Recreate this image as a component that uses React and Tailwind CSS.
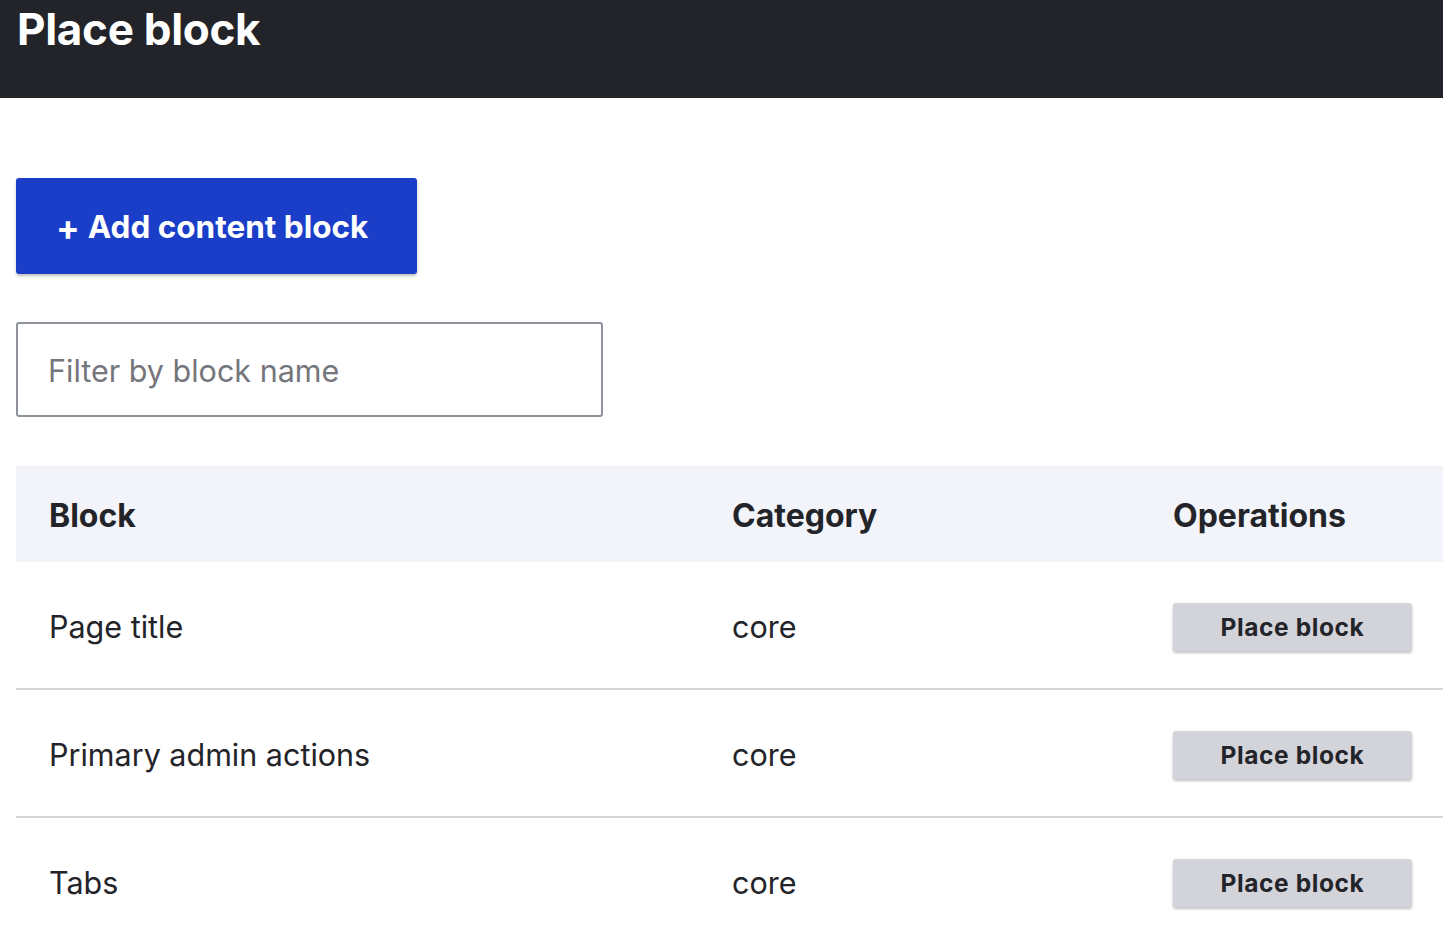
import React from "react";

const rows = [
  { name: "Page title", category: "core" },
  { name: "Primary admin actions", category: "core" },
  { name: "Tabs", category: "core" },
];

const App = () => {
  return (
    <div className="min-h-screen bg-white font-['Inter',sans-serif] text-[#232429] overflow-hidden">
      <div className="h-[98px] bg-[#232429] pl-[17px]">
        <h1 className="text-[44px] font-bold leading-[58px] text-white tracking-[-0.3px]">
          Place block
        </h1>
      </div>

      <div className="pl-4 pt-[80px]">
        <button className="flex h-[96px] w-[401px] items-center rounded-[3px] bg-[#1a3ec8] pl-[40px] pt-[2px] text-[31.5px] font-bold text-white shadow-[0_2px_3px_rgba(0,0,0,0.25)]">
          <span className="mr-[8px] text-[35px] leading-none">+</span>
          Add content block
        </button>

        <input
          className="mt-[48px] block h-[95px] w-[587px] rounded-[3px] border-2 border-[#8e929c] px-[30px] pt-[2px] text-[30.5px] placeholder:text-[#75767b] outline-none"
          placeholder="Filter by block name"
        />

        <div className="mt-[49px] w-[1427px]">
          <div className="grid h-[96px] grid-cols-[683px_441px_1fr] items-center bg-[#f3f4f9] pt-[3px] text-[32px] font-bold">
            <div className="pl-[33px]">Block</div>
            <div className="pl-[33px]">Category</div>
            <div className="pl-[33px]">Operations</div>
          </div>
          {rows.map((row) => (
            <div
              key={row.name}
              className="grid h-[128px] grid-cols-[683px_441px_1fr] items-center border-b-2 border-[#d4d4d8] pt-[3px] text-[30.5px]"
            >
              <div className="pl-[33px]">{row.name}</div>
              <div className="pl-[33px]">{row.category}</div>
              <div className="pl-[33px]">
                <button className="h-[48px] w-[239px] rounded-[3px] bg-[#d3d4d9] text-[24.5px] font-bold tracking-[0.6px] text-[#232429] shadow-[0_2px_3px_rgba(0,0,0,0.25)]">
                  Place block
                </button>
              </div>
            </div>
          ))}
        </div>
      </div>
    </div>
  );
};

export default App;
